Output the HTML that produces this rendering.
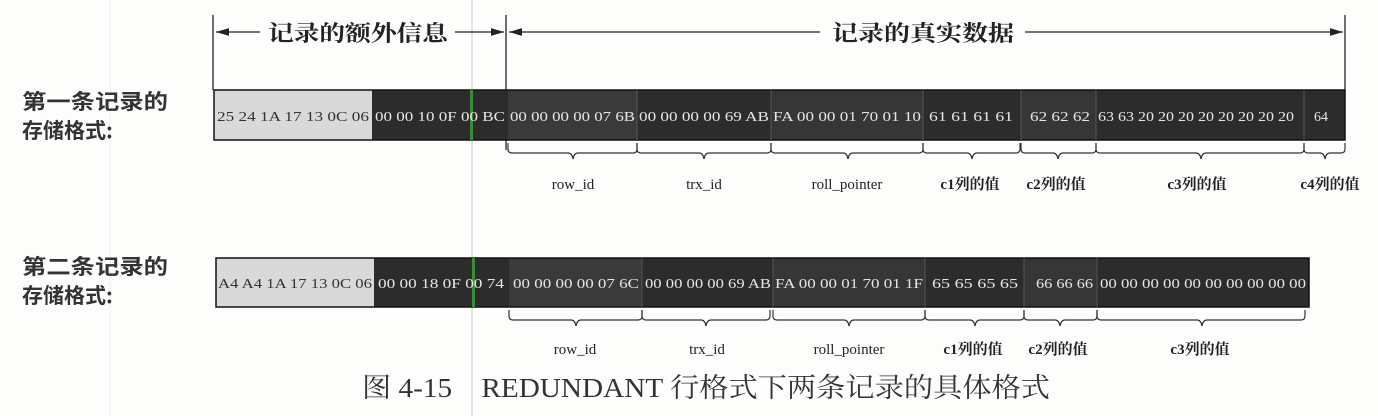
<!DOCTYPE html>
<html><head><meta charset="utf-8"><style>
html,body{margin:0;padding:0;background:#fdfdfc;}
body{width:1378px;height:416px;overflow:hidden;position:relative;}
svg{position:absolute;left:0;top:0;}
</style></head><body>
<svg width="1378" height="416" xmlns="http://www.w3.org/2000/svg" font-family="Liberation Serif, Noto Serif CJK SC, serif">
<defs>
<marker id="ah" markerWidth="10" markerHeight="6" refX="10" refY="3" orient="auto"><path d="M0,0 L10,3 L0,6z" fill="#222"/></marker>
</defs>
<line x1="472" y1="0" x2="472" y2="416" stroke="#c8c8c8" stroke-width="1"/>
<line x1="110" y1="0" x2="110" y2="416" stroke="#f0f0f0" stroke-width="1"/>
<g stroke="#222" stroke-width="1.3" fill="none">
<line x1="213" y1="15" x2="213" y2="90"/>
<line x1="506" y1="15" x2="506" y2="150"/>
<line x1="1345" y1="15" x2="1345" y2="90"/>
<line x1="260" y1="32" x2="216" y2="32" marker-end="url(#ah)"/>
<line x1="455" y1="32" x2="504" y2="32" marker-end="url(#ah)"/>
<line x1="820" y1="32" x2="509" y2="32" marker-end="url(#ah)"/>
<line x1="1025" y1="32" x2="1343" y2="32" marker-end="url(#ah)"/>
</g>
<g font-family="Noto Serif CJK SC, serif" font-size="22" font-weight="bold" fill="#222">
<text x="268" y="41" textLength="180" lengthAdjust="spacingAndGlyphs">记录的额外信息</text>
<text x="832" y="41" textLength="182" lengthAdjust="spacingAndGlyphs">记录的真实数据</text>
</g>
<g font-family="Noto Sans CJK SC, sans-serif" font-size="21" font-weight="bold" fill="#333">
<text x="22" y="109" textLength="146" lengthAdjust="spacingAndGlyphs">第一条记录的</text>
<text x="22" y="138">存储格式:</text>
<text x="22" y="274" textLength="146" lengthAdjust="spacingAndGlyphs">第二条记录的</text>
<text x="22" y="303">存储格式:</text>
</g>
<!-- row 1 -->
<rect x="214" y="90" width="158" height="50" fill="#d9d9d9"/>
<rect x="372" y="90" width="973" height="50" fill="#2c2c2c"/>
<rect x="508" y="90" width="129" height="50" fill="#3a3a3a"/>
<rect x="771" y="90" width="152" height="50" fill="#363636"/>
<rect x="1021" y="90" width="75" height="50" fill="#363636"/>
<rect x="214" y="90" width="1131" height="50" fill="none" stroke="#111" stroke-width="1.5"/>
<g stroke="#555" stroke-width="1"><line x1="637" y1="90" x2="637" y2="140"/><line x1="771" y1="90" x2="771" y2="140"/><line x1="923" y1="90" x2="923" y2="140"/><line x1="1021" y1="90" x2="1021" y2="140"/><line x1="1096" y1="90" x2="1096" y2="140"/><line x1="1304" y1="90" x2="1304" y2="140"/></g>
<rect x="470" y="90" width="3" height="50" fill="#3a8a3a"/>
<g font-size="14" fill="#e6e6e6">
<text x="217" y="121" fill="#333" textLength="152" lengthAdjust="spacingAndGlyphs">25 24 1A 17 13 0C 06</text>
<text x="375" y="121" textLength="130" lengthAdjust="spacingAndGlyphs">00 00 10 0F 00 BC</text>
<text x="510" y="121" textLength="125" lengthAdjust="spacingAndGlyphs">00 00 00 00 07 6B</text>
<text x="639" y="121" textLength="130" lengthAdjust="spacingAndGlyphs">00 00 00 00 69 AB</text>
<text x="773" y="121" textLength="148" lengthAdjust="spacingAndGlyphs">FA 00 00 01 70 01 10</text>
<text x="929" y="121" textLength="84" lengthAdjust="spacingAndGlyphs">61 61 61 61</text>
<text x="1030" y="121" textLength="60" lengthAdjust="spacingAndGlyphs">62 62 62</text>
<text x="1098" y="121" textLength="196" lengthAdjust="spacingAndGlyphs">63 63 20 20 20 20 20 20 20 20</text>
<text x="1314" y="121">64</text>
</g>
<!-- row 2 -->
<rect x="216" y="258" width="158" height="49" fill="#d9d9d9"/>
<rect x="374" y="258" width="935" height="49" fill="#2c2c2c"/>
<rect x="509" y="258" width="133" height="49" fill="#3a3a3a"/>
<rect x="773" y="258" width="152" height="49" fill="#363636"/>
<rect x="1024" y="258" width="73" height="49" fill="#363636"/>
<rect x="216" y="258" width="1093" height="49" fill="none" stroke="#111" stroke-width="1.5"/>
<g stroke="#555" stroke-width="1"><line x1="642" y1="258" x2="642" y2="307"/><line x1="773" y1="258" x2="773" y2="307"/><line x1="925" y1="258" x2="925" y2="307"/><line x1="1024" y1="258" x2="1024" y2="307"/><line x1="1097" y1="258" x2="1097" y2="307"/></g>
<rect x="472" y="258" width="3" height="49" fill="#3a8a3a"/>
<g font-size="14" fill="#e6e6e6">
<text x="218" y="288" fill="#333" textLength="154" lengthAdjust="spacingAndGlyphs">A4 A4 1A 17 13 0C 06</text>
<text x="378" y="288" textLength="126" lengthAdjust="spacingAndGlyphs">00 00 18 0F 00 74</text>
<text x="513" y="288" textLength="126" lengthAdjust="spacingAndGlyphs">00 00 00 00 07 6C</text>
<text x="645" y="288" textLength="126" lengthAdjust="spacingAndGlyphs">00 00 00 00 69 AB</text>
<text x="775" y="288" textLength="148" lengthAdjust="spacingAndGlyphs">FA 00 00 01 70 01 1F</text>
<text x="932" y="288" textLength="86" lengthAdjust="spacingAndGlyphs">65 65 65 65</text>
<text x="1036" y="288" textLength="57" lengthAdjust="spacingAndGlyphs">66 66 66</text>
<text x="1100" y="288" textLength="206" lengthAdjust="spacingAndGlyphs">00 00 00 00 00 00 00 00 00 00</text>
</g>
<g stroke="#333" stroke-width="1.2" fill="none">
<path d="M508,143 v6 q0,4 4,4 h56 q4,0 5,6 q1,-6 5,-6 h55 q4,0 4,-4 v-6"/>
<path d="M637,143 v6 q0,4 4,4 h58 q4,0 5,6 q1,-6 5,-6 h58 q4,0 4,-4 v-6"/>
<path d="M771,143 v6 q0,4 4,4 h68 q4,0 5,6 q1,-6 5,-6 h66 q4,0 4,-4 v-6"/>
<path d="M923,143 v6 q0,4 4,4 h40 q4,0 5,6 q1,-6 5,-6 h39 q4,0 4,-4 v-6"/>
<path d="M1021,143 v6 q0,4 4,4 h28 q4,0 5,6 q1,-6 5,-6 h29 q4,0 4,-4 v-6"/>
<path d="M1096,143 v6 q0,4 4,4 h96 q4,0 5,6 q1,-6 5,-6 h94 q4,0 4,-4 v-6"/>
<path d="M1304,143 v6 q0,4 4,4 h12 q4,0 5,6 q1,-6 5,-6 h11 q4,0 4,-4 v-6"/>
<path d="M509,310 v6 q0,4 4,4 h58 q4,0 5,6 q1,-6 5,-6 h57 q4,0 4,-4 v-6"/>
<path d="M642,310 v6 q0,4 4,4 h55 q4,0 5,6 q1,-6 5,-6 h55 q4,0 4,-4 v-6"/>
<path d="M773,310 v6 q0,4 4,4 h67 q4,0 5,6 q1,-6 5,-6 h67 q4,0 4,-4 v-6"/>
<path d="M925,310 v6 q0,4 4,4 h41 q4,0 5,6 q1,-6 5,-6 h40 q4,0 4,-4 v-6"/>
<path d="M1024,310 v6 q0,4 4,4 h27 q4,0 5,6 q1,-6 5,-6 h28 q4,0 4,-4 v-6"/>
<path d="M1097,310 v6 q0,4 4,4 h96 q4,0 5,6 q1,-6 5,-6 h94 q4,0 4,-4 v-6"/>
</g>
<g font-size="15" fill="#222" text-anchor="middle">
<text x="573" y="189">row_id</text>
<text x="704" y="189">trx_id</text>
<text x="847" y="189">roll_pointer</text>
<text x="970" y="189" font-weight="bold">c1列的值</text>
<text x="1056" y="189" font-weight="bold">c2列的值</text>
<text x="1197" y="189" font-weight="bold">c3列的值</text>
<text x="1330" y="189" font-weight="bold">c4列的值</text>
<text x="575" y="354">row_id</text>
<text x="707" y="354">trx_id</text>
<text x="849" y="354">roll_pointer</text>
<text x="973" y="354" font-weight="bold">c1列的值</text>
<text x="1058" y="354" font-weight="bold">c2列的值</text>
<text x="1200" y="354" font-weight="bold">c3列的值</text>
</g>
<text x="362" y="397" font-size="27" fill="#333" textLength="688" lengthAdjust="spacingAndGlyphs">图 4-15　REDUNDANT 行格式下两条记录的具体格式</text>
</svg>
</body></html>
